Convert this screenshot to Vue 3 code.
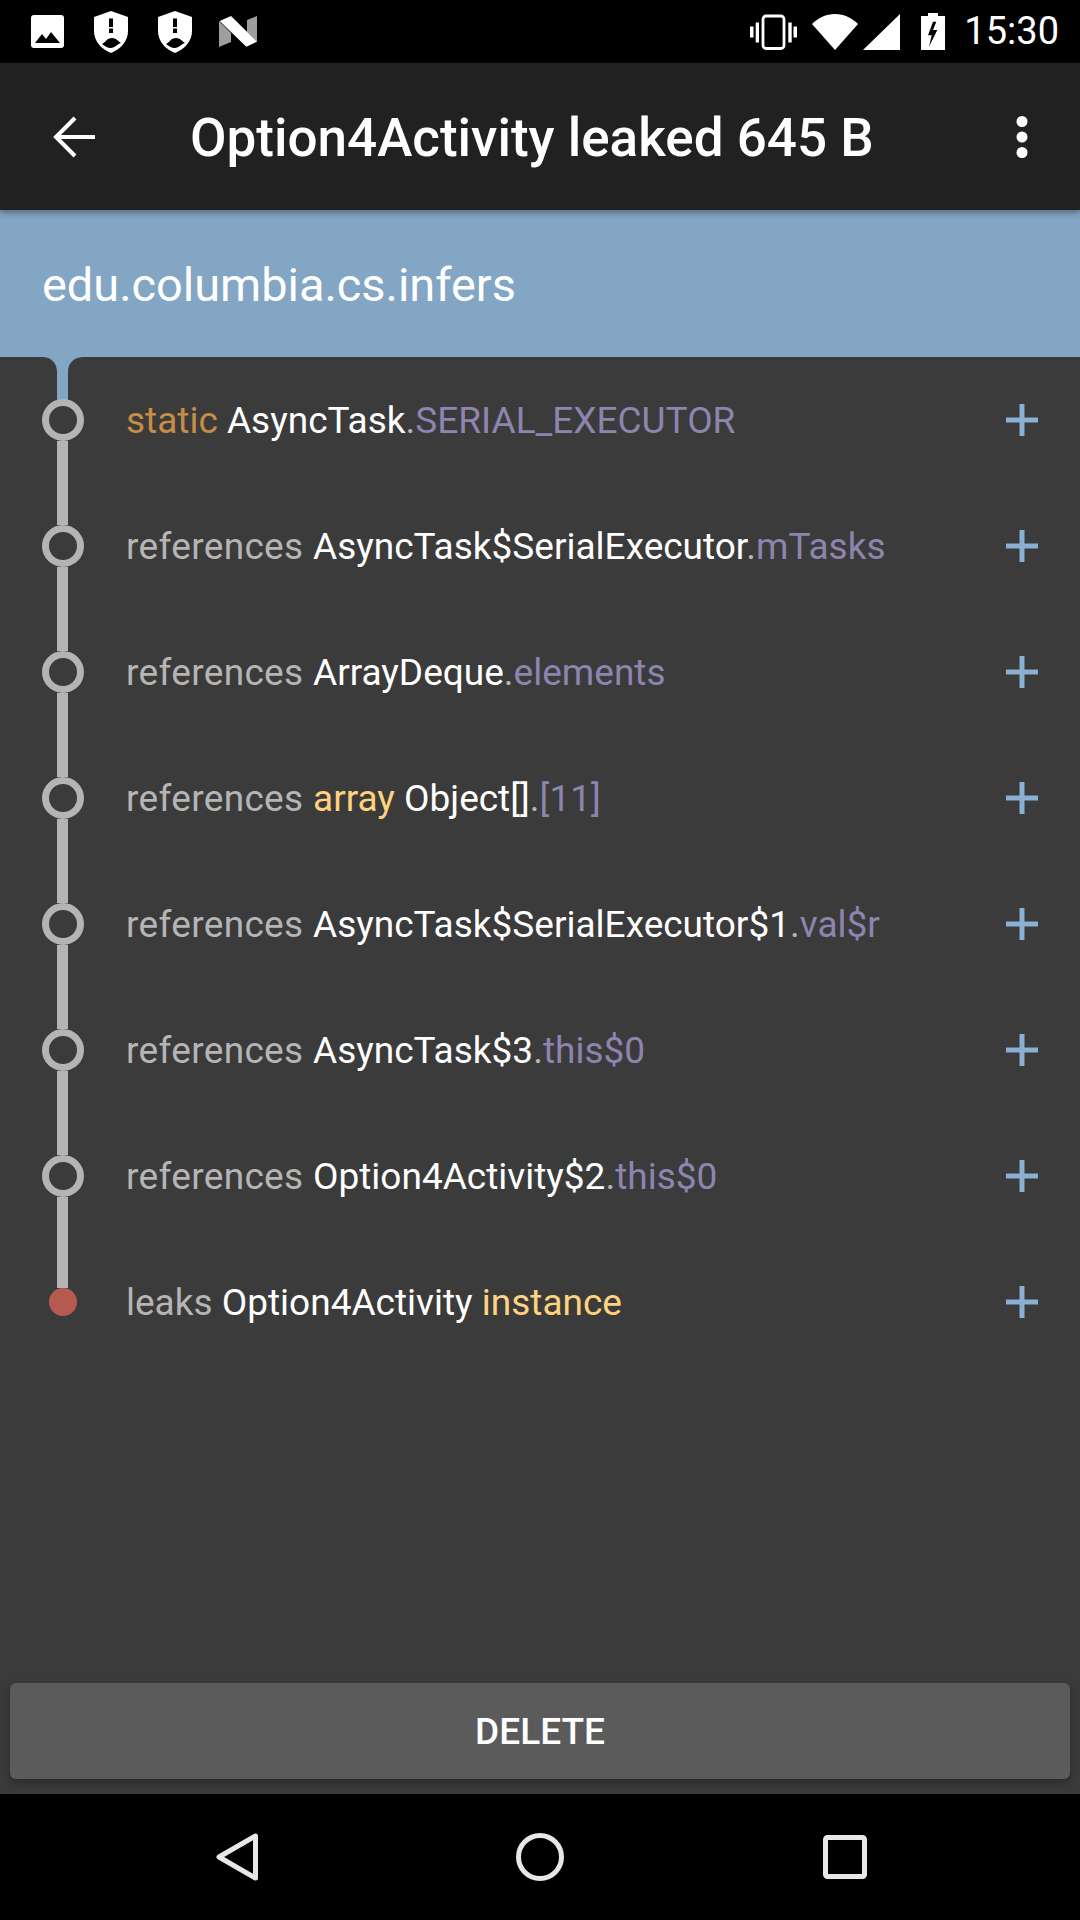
<script setup>
const rows = [
  { parts: [['kw', 'static '], ['cls', 'AsyncTask'], ['dim', '.'], ['field', 'SERIAL_EXECUTOR']] },
  { parts: [['dim wide', 'references '], ['cls', 'AsyncTask$SerialExecutor'], ['dim', '.'], ['field', 'mTasks']] },
  { parts: [['dim wide', 'references '], ['cls', 'ArrayDeque'], ['dim', '.'], ['field', 'elements']] },
  { parts: [['dim wide', 'references '], ['extra', 'array '], ['cls', 'Object[]'], ['dim', '.'], ['field', '[11]']] },
  { parts: [['dim wide', 'references '], ['cls', 'AsyncTask$SerialExecutor$1'], ['dim', '.'], ['field', 'val$r']] },
  { parts: [['dim wide', 'references '], ['cls', 'AsyncTask$3'], ['dim', '.'], ['field', 'this$0']] },
  { parts: [['dim wide', 'references '], ['cls', 'Option4Activity$2'], ['dim', '.'], ['field', 'this$0']] },
  { parts: [['dim', 'leaks '], ['cls', 'Option4Activity '], ['extra', 'instance']], leak: true },
]
</script>

<template>
  <div class="screen">
    <div class="status">
      <div class="status-left">
        <svg class="ic" width="33" height="33" viewBox="0 0 33 33">
          <path fill="#fff" fill-rule="evenodd" d="M3 0h27a3 3 0 0 1 3 3v27a3 3 0 0 1-3 3H3a3 3 0 0 1-3-3V3a3 3 0 0 1 3-3zM4 28h25L20 17l-5 7-4-5z" />
        </svg>
        <svg class="ic" width="34" height="42" viewBox="0 0 34 42" v-for="n in 2" :key="n">
          <path fill="#fff" fill-rule="evenodd" d="M17 0l17 6v14c0 10-7 18-17 22C7 38 0 30 0 20V6zM15 7.500v8.500h4V7.500zM15 17.500v4.500h4v-4.500zM8 33c4-2 5-6 10-6 4 0 6 3 9 5-4 1-6 5-10 5-4 0-6-2-9-4z" />
        </svg>
        <svg class="ic n-logo" width="38" height="31" viewBox="0 0 38 31">
          <path fill="#9e9e9e" d="M0 5l12 12v9L0 31z" />
          <path fill="#9e9e9e" d="M28 4l10-4v26L28 16z" />
          <path fill="#fff" d="M0.700 5L12 0l26 25.700-10.700 5z" />
        </svg>
      </div>
      <div class="status-right">
        <svg class="ic" width="47" height="36" viewBox="0 0 47 36">
          <path fill="#fff" d="M0 12.500h3.500v11H0zM5.700 8.500H9v20H5.700zM38.300 8.500h3.400v20h-3.400zM43.500 12.500H47v11h-3.500z" />
          <rect x="13" y="2" width="21" height="32.500" rx="3" fill="none" stroke="#fff" stroke-width="2.800" />
        </svg>
        <svg class="ic wifi" width="46" height="36" viewBox="0 0 46 36">
          <path fill="#fff" d="M23 36L0 10C6 4 14 0 23 0s17 4 23 10z" />
        </svg>
        <svg class="ic sig" width="37" height="36" viewBox="0 0 37 36">
          <path fill="#fff" d="M0 36L37 0v36z" />
        </svg>
        <svg class="ic batt" width="24" height="37" viewBox="0 0 24 37">
          <path fill="#fff" fill-rule="evenodd" d="M7 0h10v3h7v34H0V3h7zM12 8.700L7 22.300h3.700L8 33.700 16.300 17H12l3.300-8.300z" />
        </svg>
        <span class="clock">15:30</span>
      </div>
    </div>

    <div class="toolbar">
      <svg class="back" width="42" height="42" viewBox="0 0 42 42">
        <path fill="none" stroke="#fff" stroke-width="4" d="M42 21H4M22 2L3 21l19 19" />
      </svg>
      <div class="title">Option4Activity leaked 645 B</div>
      <svg class="more" width="12" height="42" viewBox="0 0 12 42">
        <circle cx="6" cy="5.500" r="5.500" fill="#fff" />
        <circle cx="6" cy="21" r="5.500" fill="#fff" />
        <circle cx="6" cy="36.500" r="5.500" fill="#fff" />
      </svg>
    </div>

    <div class="pkg">edu.columbia.cs.infers</div>

    <div class="body">
      <div class="list">
        <div class="row" v-for="(row, i) in rows" :key="i">
          <div class="track">
            <svg v-if="i === 0" class="flare" width="42" height="43" viewBox="0 0 42 43">
              <path fill="#83a6c5" d="M0 0h42c-10 0-16 6-16 15v28H15V15C15 6 9 0 0 0z" />
            </svg>
            <div v-else class="seg"></div>
            <div class="dot" :class="{ leak: row.leak }"></div>
            <div v-if="!row.leak" class="seg"></div>
            <div v-else class="seg-none"></div>
          </div>
          <div class="text">
            <span v-for="(p, j) in row.parts" :key="j" :class="p[0]">{{ p[1] }}</span>
          </div>
          <svg class="plus" width="32" height="32" viewBox="0 0 32 32">
            <path fill="#8ab0d4" d="M13.500 0h5v13.500H32v5H18.500V32h-5V18.500H0v-5h13.500z" />
          </svg>
        </div>
      </div>
      <div class="footer">
        <button class="delete">DELETE</button>
      </div>
    </div>

    <div class="nav">
      <svg width="42" height="48" viewBox="0 0 42 48">
        <path fill="none" stroke="#e8e8e8" stroke-width="5" stroke-linejoin="round" d="M39.500 3v42L3 24z" />
      </svg>
      <svg width="48" height="48" viewBox="0 0 48 48">
        <circle cx="24" cy="24" r="21.500" fill="none" stroke="#e8e8e8" stroke-width="5" />
      </svg>
      <svg width="44" height="44" viewBox="0 0 44 44">
        <rect x="2.500" y="2.500" width="39" height="39" rx="2" fill="none" stroke="#e8e8e8" stroke-width="5" />
      </svg>
    </div>
  </div>
</template>

<style scoped>
.screen {
  width: 1080px;
  height: 1920px;
  display: flex;
  flex-direction: column;
  font-family: Roboto, "Liberation Sans", sans-serif;
  background: #3b3b3b;
  overflow: hidden;
}

.status {
  height: 63px;
  background: #000;
  display: flex;
  align-items: center;
  justify-content: space-between;
  padding: 0 21px 0 31px;
  flex-shrink: 0;
}

.status-left {
  display: flex;
  align-items: center;
  gap: 30px;
}

.n-logo {
  margin-left: -3px;
}

.status-right {
  display: flex;
  align-items: center;
}

.ic {
  display: block;
}

.wifi {
  margin-left: 15px;
}

.sig {
  margin-left: 5px;
}

.batt {
  margin-left: 21px;
}

.clock {
  margin-left: 19px;
  color: #fff;
  font-size: 38px;
  line-height: 63px;
}

.toolbar {
  height: 147px;
  background: #212121;
  display: flex;
  align-items: center;
  padding-left: 53px;
  box-shadow: 0 3px 6px rgba(0, 0, 0, 0.35);
  position: relative;
  flex-shrink: 0;
}

.back {
  flex-shrink: 0;
}

.title {
  margin-left: 95px;
  padding-top: 3px;
  color: #fff;
  font-size: 53px;
  font-weight: 500;
  flex: 1;
}

.more {
  margin-right: 52px;
}

.pkg {
  height: 147px;
  background: #83a6c5;
  color: #fff;
  font-size: 46.900px;
  line-height: 149px;
  padding-left: 42px;
  flex-shrink: 0;
}

.body {
  flex: 1;
  display: flex;
  flex-direction: column;
  justify-content: space-between;
  background: #3b3b3b;
}

.row {
  height: 126px;
  display: flex;
  align-items: center;
}

.track {
  width: 126px;
  height: 126px;
  display: flex;
  flex-direction: column;
  align-items: center;
  flex-shrink: 0;
}

.flare {
  display: block;
  flex-shrink: 0;
  margin-bottom: -1px;
}

.seg {
  width: 11px;
  margin-right: 1px;
  flex: 1;
  background: #b4b4b4;
}

.seg-none {
  flex: 1;
}

.dot {
  width: 42px;
  height: 42px;
  box-sizing: border-box;
  border: 7px solid #b4b4b4;
  border-radius: 50%;
  flex-shrink: 0;
}

.dot.leak {
  width: 28px;
  height: 28px;
  border: none;
  background: #b55a50;
}

.text {
  flex: 1;
  font-size: 37px;
  white-space: nowrap;
  min-width: 0;
}

.dim {
  color: #b5b5b5;
}

.wide {
  letter-spacing: 0.330px;
}

.kw {
  color: #c68d46;
}

.cls {
  color: #fff;
}

.field {
  color: #8e84b0;
}

.extra {
  color: #ffd27f;
}

.plus {
  margin-right: 42px;
  flex-shrink: 0;
}

.footer {
  padding: 0 10px 15px;
}

.delete {
  display: block;
  width: 100%;
  height: 96px;
  border: none;
  border-radius: 6px;
  background: #5b5b5c;
  color: #fff;
  font-family: inherit;
  font-size: 37px;
  font-weight: 500;
  box-shadow: 0 4px 8px rgba(0, 0, 0, 0.3);
}

.nav {
  height: 126px;
  background: #000;
  display: flex;
  align-items: center;
  justify-content: center;
  gap: 258.500px;
  padding-left: 2px;
  flex-shrink: 0;
}
</style>
